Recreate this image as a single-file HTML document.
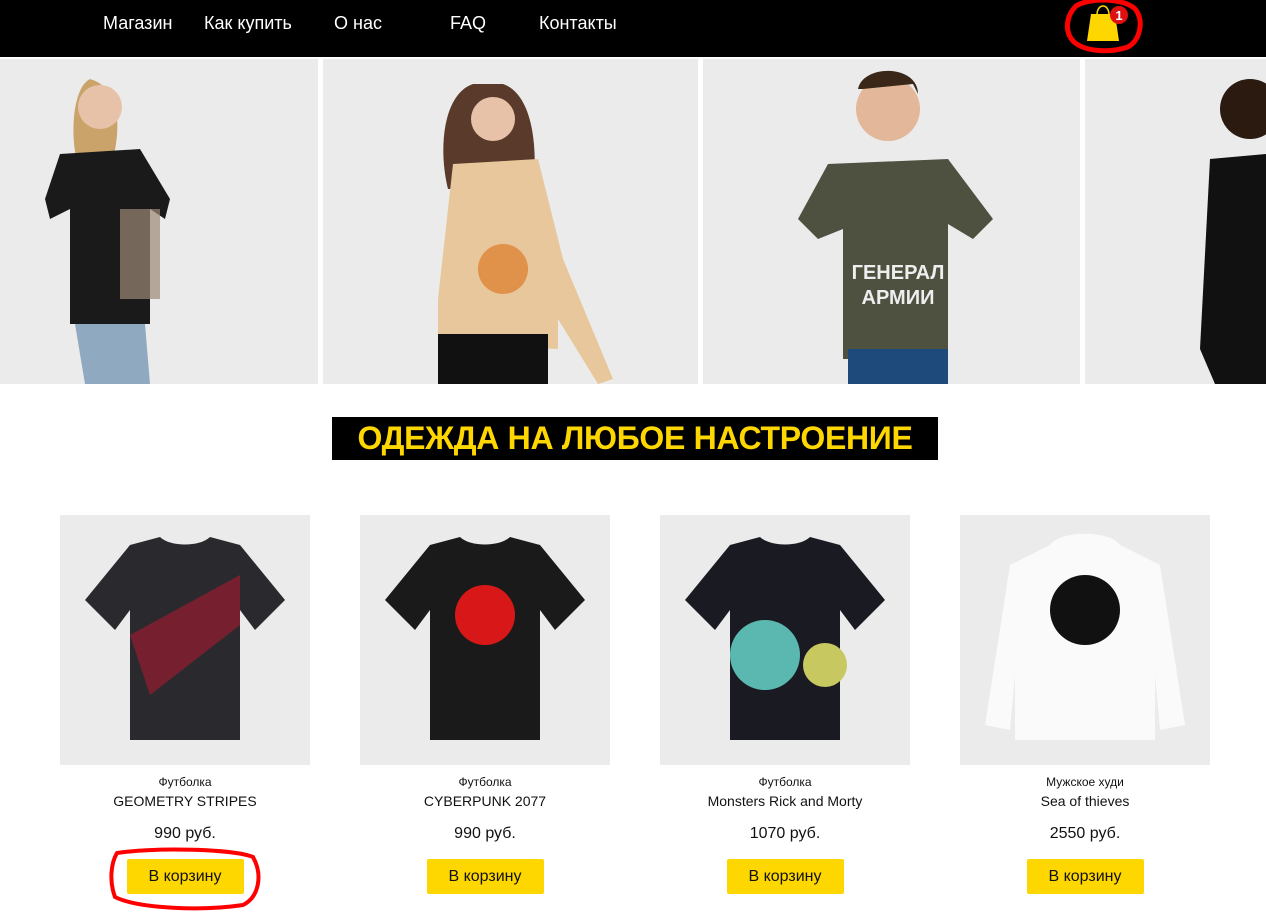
<!DOCTYPE html>
<html><head><meta charset="utf-8"><style>
*{margin:0;padding:0;box-sizing:border-box}
body{width:1266px;height:915px;overflow:hidden;background:#fff;font-family:"Liberation Sans",Arial,sans-serif;position:relative;color:#111}
.hdr{position:absolute;left:0;top:0;width:1266px;height:57px;background:#000}
.nav{position:absolute;top:13px;color:#fff;font-family:"Liberation Sans Narrow","Liberation Sans",sans-serif;font-size:18px;white-space:nowrap}
.pan{position:absolute;top:59px;height:325px;background:#ebebeb;overflow:hidden}
.title{position:absolute;left:332px;top:417px;width:606px;height:43px;background:#000;color:#ffd700;font-weight:bold;font-size:32px;text-align:center;line-height:43px;letter-spacing:-0.3px}
.card{position:absolute;top:515px;width:250px;text-align:center}
.img{width:250px;height:250px;background:#ebebeb;position:relative;overflow:hidden}
.cat{font-size:12px;margin-top:10px;line-height:14px}
.nm{font-size:14px;margin-top:4px;line-height:17px}
.pr{font-size:16px;margin-top:14px;line-height:19px}
.btn{display:inline-block;width:117px;height:35px;background:#ffd700;border-radius:2px;font-size:16px;line-height:35px;margin-top:16px}
</style></head><body>
<div class="hdr">
<div class="nav" style="left:103px">Магазин</div>
<div class="nav" style="left:204px">Как купить</div>
<div class="nav" style="left:334px">О нас</div>
<div class="nav" style="left:450px">FAQ</div>
<div class="nav" style="left:539px">Контакты</div>
<svg style="position:absolute;left:1064px;top:0" width="84" height="56" viewBox="0 0 84 56">
<path d="M12 6 C26 -3 62 -2 72 10 C80 22 76 40 64 47 C46 53 22 52 10 42 C0 32 2 16 12 6 Z" fill="none" stroke="#f00" stroke-width="5"/>
<path d="M33 15 C33 3 45 3 45 15" fill="none" stroke="#ffd700" stroke-width="1.5"/>
<path d="M27 14 L51 14 L55 41 L23 41 Z" fill="#ffd700"/>
<circle cx="55" cy="15" r="9" fill="#e01010"/>
<text x="55" y="20" font-size="13" font-weight="bold" fill="#fff" text-anchor="middle" font-family="Liberation Sans">1</text>
</svg>
</div>

<div class="pan" style="left:0;width:318px">
<svg width="318" height="325"><path d="M90 20 C70 30 70 90 80 110 L110 110 C120 80 125 30 90 20Z" fill="#c9a36a"/><circle cx="100" cy="48" r="22" fill="#e8c2a8"/><path d="M60 95 L140 90 L170 140 L165 160 L150 150 L150 265 L70 265 L70 150 L50 160 L45 140Z" fill="#1a1a1a"/><path d="M75 265 L145 265 L150 325 L85 325Z" fill="#8fa9c0"/><rect x="120" y="150" width="40" height="90" fill="#9c8a78" opacity=".7"/></svg>
</div>
<div class="pan" style="left:323px;width:375px">
<svg width="375" height="325"><path d="M150 25 C120 35 115 90 125 130 L210 130 C215 90 210 35 180 25Z" fill="#5a3a2a"/><circle cx="170" cy="60" r="22" fill="#e8c2a8"/><path d="M130 105 L215 100 L240 200 L290 320 L275 325 L235 260 L235 290 L115 285 L115 240 Z" fill="#e8c79c"/><rect x="115" y="275" width="110" height="50" fill="#111"/><circle cx="180" cy="210" r="25" fill="#e0914a"/></svg>
</div>
<div class="pan" style="left:703px;width:377px">
<svg width="377" height="325"><circle cx="185" cy="50" r="32" fill="#e3b79a"/><path d="M155 30 C160 5 215 5 215 35 L210 25 L160 30Z" fill="#3a2718"/><path d="M125 105 L245 100 L290 160 L270 180 L245 165 L245 300 L140 300 L140 170 L115 180 L95 160Z" fill="#4e5040"/><rect x="145" y="290" width="100" height="35" fill="#1d4a7a"/><text x="195" y="220" fill="#eee" font-size="20" font-weight="bold" text-anchor="middle" font-family="Liberation Sans">ГЕНЕРАЛ</text><text x="195" y="245" fill="#eee" font-size="20" font-weight="bold" text-anchor="middle" font-family="Liberation Sans">АРМИИ</text></svg>
</div>
<div class="pan" style="left:1085px;width:181px">
<svg width="181" height="325"><circle cx="165" cy="50" r="30" fill="#2a1a10"/><path d="M125 100 L181 95 L181 325 L130 325 L115 290Z" fill="#111"/></svg>
</div>

<div class="title">ОДЕЖДА НА ЛЮБОЕ НАСТРОЕНИЕ</div>

<div class="card" style="left:60px"><div class="img"><svg width="250" height="250"><path d="M70 30 L100 22 C110 32 140 32 150 22 L180 30 L225 85 L195 115 L180 95 L180 225 L70 225 L70 95 L55 115 L25 85Z" fill="#2a2a2e"/><path d="M70 120 L180 60 L180 110 L90 180Z" fill="#8a1e30" opacity=".8"/></svg></div>
<div class="cat">Футболка</div><div class="nm">GEOMETRY STRIPES</div><div class="pr">990 руб.</div>
<div class="btn" style="position:relative">В корзину<svg style="position:absolute;left:-18px;top:-14px" width="156" height="66"><path d="M8 8 C50 2 124 4 144 12 C154 30 150 52 134 60 C94 66 30 64 6 52 C0 36 2 18 8 8Z" fill="none" stroke="#f00" stroke-width="4"/></svg></div></div>
<div class="card" style="left:360px"><div class="img"><svg width="250" height="250"><path d="M70 30 L100 22 C110 32 140 32 150 22 L180 30 L225 85 L195 115 L180 95 L180 225 L70 225 L70 95 L55 115 L25 85Z" fill="#1a1a1a"/><circle cx="125" cy="100" r="30" fill="#d81818"/></svg></div>
<div class="cat">Футболка</div><div class="nm">CYBERPUNK 2077</div><div class="pr">990 руб.</div><div class="btn">В корзину</div></div>
<div class="card" style="left:660px"><div class="img"><svg width="250" height="250"><path d="M70 30 L100 22 C110 32 140 32 150 22 L180 30 L225 85 L195 115 L180 95 L180 225 L70 225 L70 95 L55 115 L25 85Z" fill="#1a1a22"/><circle cx="105" cy="140" r="35" fill="#5ab8b0"/><circle cx="165" cy="150" r="22" fill="#c8c860"/></svg></div>
<div class="cat">Футболка</div><div class="nm">Monsters Rick and Morty</div><div class="pr">1070 руб.</div><div class="btn">В корзину</div></div>
<div class="card" style="left:960px"><div class="img"><svg width="250" height="250"><path d="M90 30 C100 15 150 15 160 30 L200 50 L225 210 L200 215 L195 160 L195 225 L55 225 L55 160 L50 215 L25 210 L50 50Z" fill="#fafafa"/><circle cx="125" cy="95" r="35" fill="#111"/></svg></div>
<div class="cat">Мужское худи</div><div class="nm">Sea of thieves</div><div class="pr">2550 руб.</div><div class="btn">В корзину</div></div>
</body></html>
